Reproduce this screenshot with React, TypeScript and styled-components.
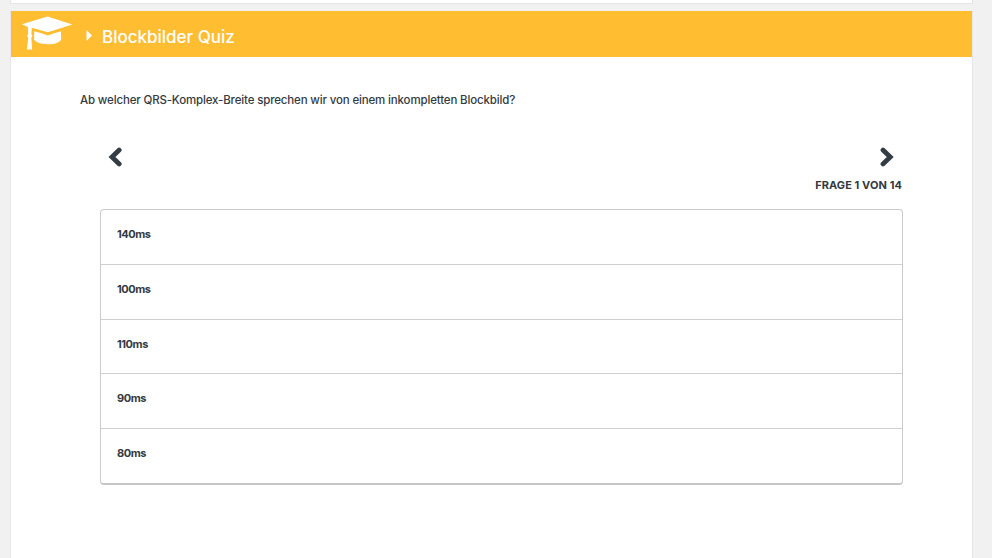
import React from "react";
import styled, { createGlobalStyle } from "styled-components";

const GlobalStyle = createGlobalStyle`
  * { box-sizing: border-box; }
  body { margin: 0; background: #f1f1f1; overflow: hidden; color: #343a3f; font-family: Inter, "Open Sans", sans-serif; }
`;

const Page = styled.div`
  display: flex;
  flex-direction: column;
  gap: 7px;
  height: 558px;
  padding: 0 19px 0 10px;
`;

const PreviousPanel = styled.div`
  height: 4px;
  flex: none;
  background: #fff;
  border: solid #e3e5e7;
  border-width: 0 1px 1px;
`;

const Panel = styled.main`
  flex: 1;
  background: #fff;
  border: solid #e6e6e6;
  border-width: 0 1px;
`;

const Header = styled.header`
  display: flex;
  align-items: center;
  height: 46px;
  padding-left: 11px;
  background: #ffbd31;
  color: #fff;
`;

const Cap = styled.svg`
  width: 52px;
  height: 36px;
  flex: none;
  margin-top: -2px;
`;

const Caret = styled.svg`
  width: 6px;
  height: 11px;
  margin: 3px 10px 0 12px;
`;

const Title = styled.h1`
  margin: 6px 0 0;
  font: 500 17px/24px Inter, sans-serif;
  letter-spacing: 0;
`;

const Quiz = styled.section`
  padding: 34px 69px 0;
`;

const Question = styled.p`
  margin: 0;
  font: 500 11.5px/18px Inter, sans-serif;
  letter-spacing: -0.155px;
  white-space: nowrap;
`;

const Navigation = styled.nav`
  display: flex;
  justify-content: space-between;
  margin-top: 38px;
  padding: 0 9px 0 28px;
`;

const NavButton = styled.button`
  display: block;
  width: 14px;
  height: 20px;
  padding: 0;
  border: 0;
  background: none;
  color: #343d44;

  svg { display: block; }
`;

const Progress = styled.div`
  margin: 10px 1px 0 0;
  font: 700 11px/16px Inter, sans-serif;
  letter-spacing: 0.08px;
  text-align: right;
`;

const Answers = styled.ul`
  margin: 16px 0 0 20px;
  padding: 0;
  list-style: none;
  border: 1px solid #cbcbcb;
  border-bottom: 2px solid #c6c6c6;
  border-radius: 4px;
`;

const Answer = styled.li`
  height: 54.75px;
  padding: 16px;
  font: 700 11px/16px Inter, sans-serif;
  letter-spacing: -0.45px;

  &:not(:last-child) { border-bottom: 1px solid #cfcfcf; }
  &:last-child { height: 54px; }
`;

const answers = ["140ms", "100ms", "110ms", "90ms", "80ms"];

function Chevron({ next = false }: { next?: boolean }) {
  return (
    <svg width="14" height="20" viewBox="0 0 14 20" fill="none" stroke="currentColor" strokeWidth="4.8" strokeLinecap="round">
      <path d={next ? "M3 3.1 10.2 10 3 16.9" : "M11.2 3.1 4 10l7.2 6.9"} />
    </svg>
  );
}

export default function App() {
  return (
    <>
      <GlobalStyle />
      <Page>
        <PreviousPanel />
        <Panel>
          <Header>
            <Cap viewBox="0 0 52 36" fill="currentColor" aria-hidden="true">
              <path d="M0 9.2 25.5 1.5 50.4 9.4 25.8 17.3 9.8 12.8 9.4 19Q11.2 21 9.3 22.8L10.2 34.4H4.8L6.3 22.8Q4.4 21 6.2 19L6 12Z" />
              <path d="M12.3 16.3Q20 18 25.8 20.6Q32 18 38.9 16.3L39.2 24.5C37 28 32 29.2 26 29.2 19 29.2 14 27.5 12 24.5Z" />
            </Cap>
            <Caret viewBox="0 0 6 11" fill="currentColor" aria-hidden="true">
              <path d="M0.5 0 6 5.5 0.5 11Z" />
            </Caret>
            <Title>Blockbilder Quiz</Title>
          </Header>
          <Quiz>
            <Question>Ab welcher QRS-Komplex-Breite sprechen wir von einem inkompletten Blockbild?</Question>
            <Navigation>
              <NavButton aria-label="Vorherige Frage"><Chevron /></NavButton>
              <NavButton aria-label="Nächste Frage"><Chevron next /></NavButton>
            </Navigation>
            <Progress>FRAGE 1 VON 14</Progress>
            <Answers>
              {answers.map((answer) => <Answer key={answer}>{answer}</Answer>)}
            </Answers>
          </Quiz>
        </Panel>
      </Page>
    </>
  );
}
